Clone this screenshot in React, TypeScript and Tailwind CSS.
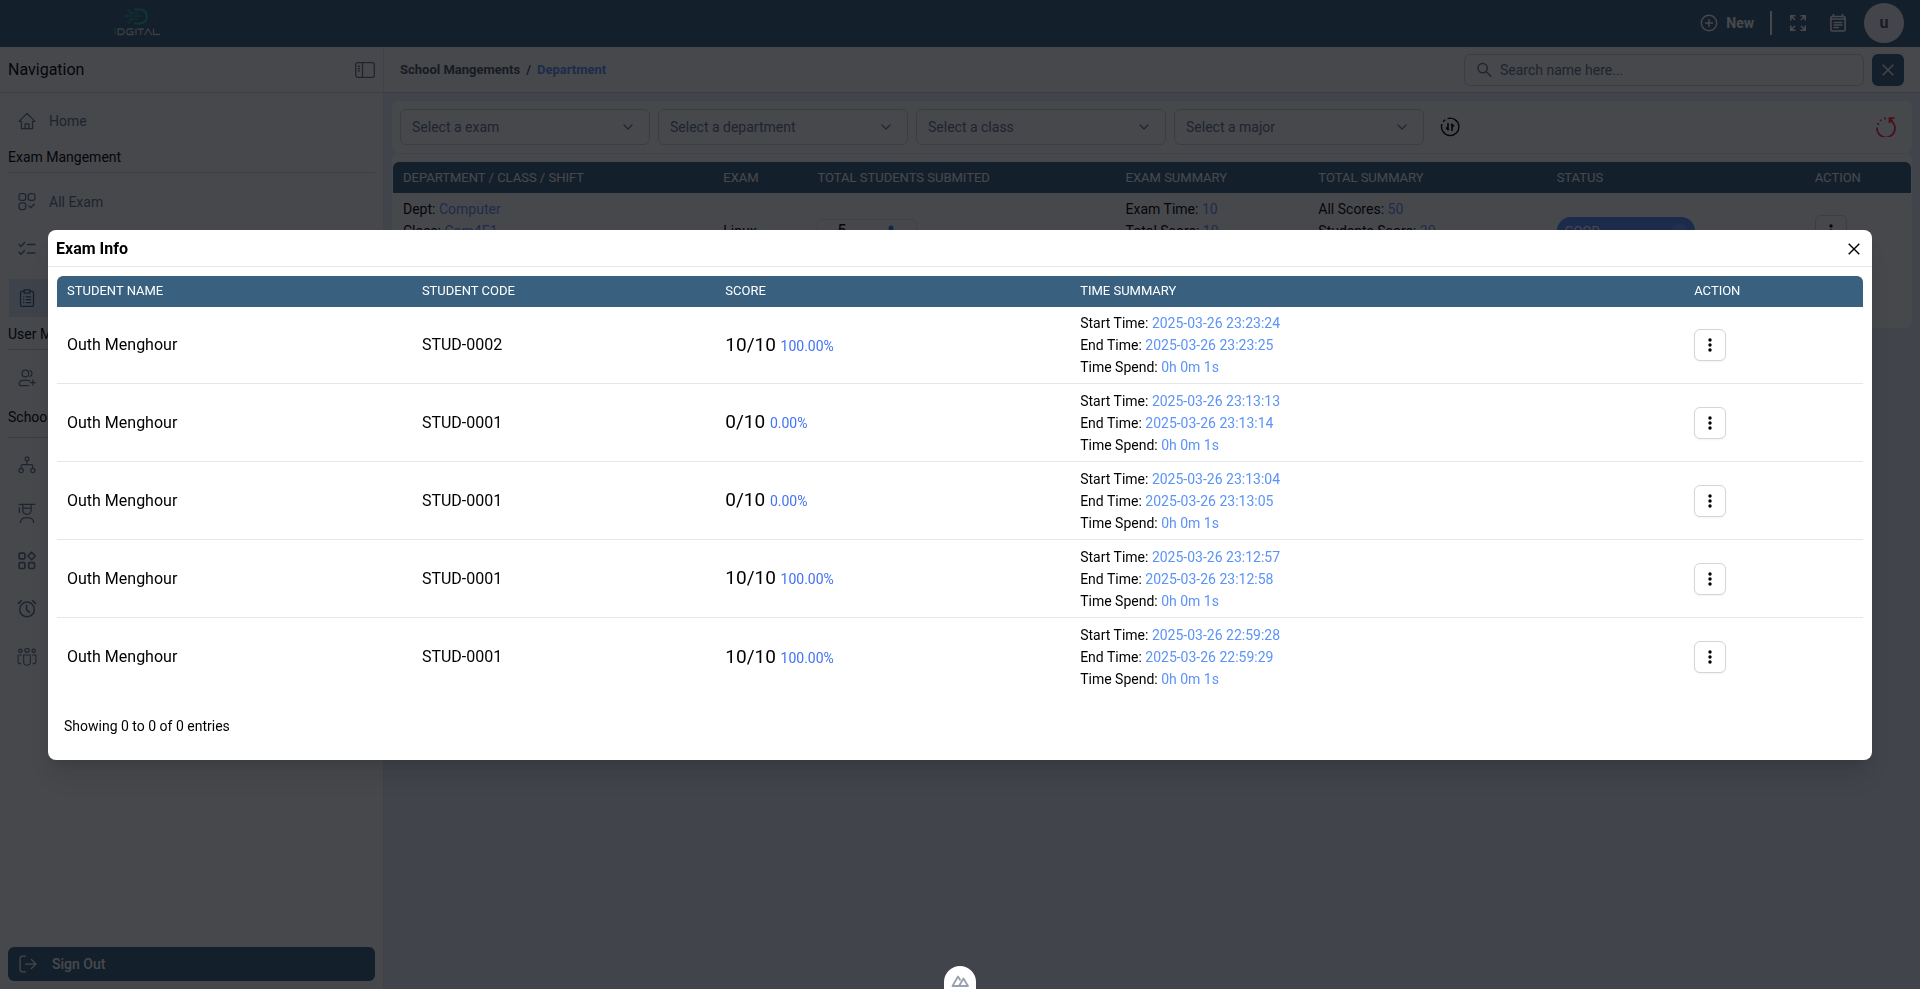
import React from "react";
import { ChevronDown } from "lucide-react";

type IconProps = { className?: string };

const stroke = {
  fill: "none",
  stroke: "currentColor",
  strokeWidth: 1.5,
  strokeLinecap: "round" as const,
  strokeLinejoin: "round" as const,
};

function Svg({ className = "size-5", children }: IconProps & { children: React.ReactNode }) {
  return (
    <svg viewBox="0 0 24 24" className={className} {...stroke} aria-hidden="true">
      {children}
    </svg>
  );
}

const icons = {
  home: (
    <Svg>
      <path d="M2.5 12.5 12 2.8l9.5 9.7H18.7v8.7H5.3v-8.7z" />
      <path d="M9.7 21v-5.5h4.6V21" />
    </Svg>
  ),
  allExam: (
    <Svg>
      <rect x="2.5" y="2" width="8" height="8" rx="2.5" />
      <rect x="13.5" y="2" width="8" height="8" rx="2.5" />
      <rect x="2.5" y="13" width="8" height="8" rx="2.5" />
      <path d="m14.2 16.7 2.2 2.2 4.2-4.2" />
    </Svg>
  ),
  checklist: (
    <Svg>
      <path d="m2.5 5.3 2.3 2.4L9 3.2M2.5 14.8l2.3 2.4L9 12.7M12.5 5.5h9M12.5 15.5h9" strokeWidth={1.8} />
    </Svg>
  ),
  clipboard: (
    <Svg>
      <path d="M8.5 4H5.8c-.9 0-1.6.7-1.6 1.6v14.8c0 .9.7 1.6 1.6 1.6h12.4c.9 0 1.6-.7 1.6-1.6V5.6c0-.9-.7-1.6-1.6-1.6h-2.7" />
      <path d="M8.5 2.2h7v4h-7zM7.8 10.5h.4M7.8 14h.4M7.8 17.5h.4M11 10.5h5.5M11 14h5.5M11 17.5h5.5" />
    </Svg>
  ),
  userAdd: (
    <Svg>
      <circle cx="10" cy="6.5" r="4" />
      <path d="M15.5 2.8a4 4 0 0 1 0 7.4M14 21H4.5c-1.3 0-2-.8-2-2 0-2.6 2.6-4.5 7.5-4.5 2.2 0 4 .4 5.3 1.1M19 14.5v6M16 17.5h6" />
    </Svg>
  ),
  org: (
    <Svg>
      <circle cx="12" cy="4.5" r="2.3" />
      <circle cx="5" cy="18.5" r="2.6" />
      <circle cx="19" cy="18.5" r="2.6" />
      <path d="M12 7v4.5M5 15.5v-2c0-1.1.9-2 2-2h10c1.1 0 2 .9 2 2v2" />
    </Svg>
  ),
  student: (
    <Svg>
      <path d="M2.5 1.5h19M7 1.5v7c0 3 2.2 5 5 5s5-2 5-5v-7M7 6h10M2.8 5.5v6M4 23.5c.3-3.8 3.4-6 8-6s7.7 2.2 8 6" />
    </Svg>
  ),
  category: (
    <Svg>
      <g strokeWidth={2}>
        <rect x="2.5" y="2.5" width="7" height="7" rx="1.5" />
        <rect x="2.5" y="14" width="7" height="7" rx="1.5" />
        <rect x="14" y="14" width="7" height="7" rx="1.5" />
        <path d="m17.5 1.5 4.5 4.5-4.5 4.5L13 6z" />
      </g>
    </Svg>
  ),
  alarm: (
    <Svg>
      <circle cx="12" cy="12.5" r="8.8" strokeWidth={1.8} />
      <path d="M11.5 7.5V13l3.5 3M1.5 5.5 5.3 2M22.5 5.5 18.7 2" strokeWidth={1.8} />
    </Svg>
  ),
  team: (
    <Svg>
      <circle cx="12" cy="4" r="2.5" />
      <circle cx="4" cy="4.5" r="2" />
      <circle cx="20" cy="4.5" r="2" />
      <path d="M8 9.5h8V18c0 2.3-1.7 3.8-4 3.8S8 20.300 8 18zM5.500 9.500H1.300v7.800c0 1.800 1.300 2.800 3.500 2.800M18.500 9.500h4.200v7.800c0 1.800-1.300 2.800-3.500 2.800" strokeWidth={1.3} />
    </Svg>
  ),
};

function Dots() {
  return (
    <button
      type="button"
      aria-label="Row actions"
      className="flex size-8 items-center justify-center rounded-md border border-gray-300 bg-white text-black shadow-xs"
    >
      <svg viewBox="0 0 16 16" className="size-4" fill="currentColor" aria-hidden="true">
        <circle cx="8" cy="3" r="1.7" />
        <circle cx="8" cy="8" r="1.7" />
        <circle cx="8" cy="13" r="1.7" />
      </svg>
    </button>
  );
}

function Cross({ className = "size-3" }: IconProps) {
  return (
    <svg viewBox="0 0 12 12" className={className} fill="none" stroke="currentColor" strokeWidth={1.4} aria-hidden="true">
      <path d="m.7.7 10.6 10.6M11.3.7.7 11.3" />
    </svg>
  );
}

function Logo() {
  return (
    <svg viewBox="0 0 46 28" className="h-7 w-[46px]" aria-label="iDGITAL" role="img">
      <g fill="none" stroke="#2bb5a6" strokeWidth="1">
        <path d="M20 1.5h6a7 7 0 0 1 0 14h-6" strokeWidth="2" />
        <path d="M15 5h9M13 8h15M15 11h9M18 5l-2.5-3M18 11l-2.5 3.5" />
        <circle cx="14.5" cy="2.5" r="1" />
        <circle cx="12.5" cy="8" r="1" />
        <circle cx="14.5" cy="14.5" r="1" />
      </g>
      <g fill="none" stroke="#cfd8dc" strokeWidth="1.3">
        <path d="M1 20.5V27" stroke="#2bb5a6" />
        <path d="M4 21h4.5l1.500 1.500V25l-1.500 1.500H4zM19 21h-5l-1.200 1.200v3L14 26.500h5v-2.700h-3M22 20.500V27M23.500 21H30M26.700 21v6M30.500 27l3.500-6 3.800 6M39.500 20.500v6H46" />
      </g>
    </svg>
  );
}

function NavLabel({ children, className = "pt-[7px] pb-[5px]" }: { children: string; className?: string }) {
  return <h2 className={`border-b border-gray-300 text-sm leading-5 text-black ${className}`}>{children}</h2>;
}

function NavItem({ icon, label, name, active = false }: { icon: React.ReactNode; label?: string; name?: string; active?: boolean }) {
  return (
    <a
      href="#"
      aria-label={name}
      className={`mx-px flex h-[38px] items-center gap-3 px-2 text-sm ${
        active ? "bg-[#dbe7fb] text-[#39607f]" : "text-slate-500"
      }`}
    >
      {icon}
      {label}
    </a>
  );
}

function Sidebar() {
  return (
    <aside className="flex w-96 shrink-0 flex-col border-r border-gray-200 bg-white">
      <div className="flex h-[46px] items-center justify-between border-b border-gray-300 px-2">
        <span className="text-base text-black">Navigation</span>
        <button type="button" aria-label="Toggle navigation" className="text-gray-500">
          <svg viewBox="0 0 20 16" className="h-4 w-5" fill="none" stroke="currentColor" strokeWidth={1.3} aria-hidden="true">
            <rect x=".7" y=".7" width="18.6" height="14.6" rx="2" />
            <path d="M7.5.7v14.6M2.8 4.2H5M2.8 6.5H5M2.8 8.8H5" />
          </svg>
        </button>
      </div>
      <nav className="flex flex-1 flex-col px-2 pt-[9px]">
        <NavItem icon={icons.home} label="Home" />
        <NavLabel>Exam Mangement</NavLabel>
        <div className="flex flex-col gap-2.5 pt-2.5">
          <NavItem icon={icons.allExam} label="All Exam" />
          <NavItem icon={icons.checklist} name="Exam Result" />
          <NavItem icon={icons.clipboard} name="Exam Submited" active />
        </div>
        <NavLabel>User Mangement</NavLabel>
        <div className="flex flex-col pt-[9px]">
          <NavItem icon={icons.userAdd} name="Users" />
        </div>
        <NavLabel className="py-2.5">School Mangement</NavLabel>
        <div className="flex flex-col gap-2.5 pt-2">
          <NavItem icon={icons.org} name="Department" />
          <NavItem icon={icons.student} name="Student" />
          <NavItem icon={icons.category} name="Class" />
          <NavItem icon={icons.alarm} name="Shift" />
          <NavItem icon={icons.team} name="Group" />
        </div>
      </nav>
      <div className="p-2">
        <button type="button" className="flex h-[34px] w-full items-center gap-3.5 rounded-md bg-[#39607f] px-2.5 text-sm font-medium text-white">
          <Svg>
            <path d="M9 2.5H5A2.500 2.500 0 0 0 2.500 5v14A2.500 2.500 0 0 0 5 21.500h4M9 12h12.500M16 6.500l5.500 5.500-5.500 5.500" />
          </Svg>
          Sign Out
        </button>
      </div>
    </aside>
  );
}

function Header() {
  return (
    <header className="flex h-[47px] items-center justify-between bg-[#39607f] pr-4 pb-px pl-[114px] text-white">
      <div className="pb-[3px]">
        <Logo />
      </div>
      <div className="flex items-center">
        <button type="button" className="flex items-center gap-2 text-sm font-bold">
          <svg viewBox="0 0 18 18" className="size-[18px]" fill="none" stroke="currentColor" strokeWidth={1.4} aria-hidden="true">
            <circle cx="9" cy="9" r="7.7" />
            <path d="M9 5v8M5 9h8" />
          </svg>
          New
        </button>
        <span className="mx-4 h-6 w-0.5 bg-white" />
        <button type="button" aria-label="Full screen" className="ml-0.5">
          <svg viewBox="0 0 16 16" className="size-4" fill="none" stroke="currentColor" strokeWidth={1.6} aria-hidden="true">
            <path d="M.8 5.5V.8h4.7M1 1l4 4M10.5.8h4.7v4.7M15 1l-4 4M.8 10.5v4.7h4.7M1 15l4-4M10.5 15.2h4.7v-4.7M15 15l-4-4" />
          </svg>
        </button>
        <button type="button" aria-label="Calendar" className="ml-6">
          <svg viewBox="0 0 16 18" className="h-[18px] w-4" fill="none" stroke="currentColor" strokeWidth={1.6} aria-hidden="true">
            <rect x=".9" y="2.5" width="14.2" height="14.5" rx="1.2" />
            <path d="M3.5 0v3M12.5 0v3M1 5h14M3.5 8.5h9M3.5 11h9M3.5 13.5H9" />
          </svg>
        </button>
        <button type="button" aria-label="Account" className="ml-[18px] flex size-10 items-center justify-center rounded-full bg-gray-100 text-base font-bold text-gray-600">
          u
        </button>
      </div>
    </header>
  );
}

function Toolbar() {
  return (
    <div className="flex h-[46px] items-center justify-between border-b border-gray-300 bg-white px-4">
      <nav aria-label="Breadcrumb" className="flex gap-1.5 text-[13px] font-bold text-gray-600">
        <a href="#">School Mangements</a>
        <span>/</span>
        <a href="#" className="text-[#5b93f8]">Department</a>
      </nav>
      <div className="flex gap-2">
        <label className="flex h-8 w-[400px] items-center gap-2 rounded-md border border-gray-300 px-3 text-gray-500">
          <svg viewBox="0 0 16 16" className="size-4" fill="none" stroke="currentColor" strokeWidth={1.5} aria-hidden="true">
            <circle cx="6" cy="6" r="5" />
            <path d="m9.7 9.7 5.6 5.6" />
          </svg>
          <input aria-label="Search name" placeholder="Search name here..." className="w-full bg-transparent text-sm outline-none placeholder:text-slate-500" />
        </label>
        <button type="button" aria-label="Clear search" className="flex size-8 items-center justify-center rounded-md bg-[#39607f] text-white">
          <Cross />
        </button>
      </div>
    </div>
  );
}

function Filters() {
  const options = ["Select a exam", "Select a department", "Select a class", "Select a major"];
  return (
    <div className="flex h-[52px] items-center rounded-md bg-white px-2">
      <div className="flex gap-2">
        {options.map((text) => (
          <div key={text} className="relative">
            <select aria-label={text} className="h-9 w-[250px] appearance-none rounded-md border border-gray-300 bg-transparent px-[11px] text-sm text-slate-500">
              <option>{text}</option>
            </select>
            <ChevronDown className="pointer-events-none absolute top-2.5 right-3.5 size-4 text-slate-500" strokeWidth={1.8} />
          </div>
        ))}
      </div>
      <button type="button" aria-label="Sort" className="ml-4 text-black">
        <svg viewBox="0 0 20 20" className="size-5" fill="none" stroke="currentColor" strokeWidth={1.4} aria-hidden="true">
          <path d="M7.5 1.6A8.7 8.7 0 1 1 2 7M3.2 4.700l2-2" />
          <path d="M8 6v6.500M6 10.500l2 2.200 1-1M12 14V7.500M14 9.500l-2-2.200-1 1" strokeWidth={1.6} />
        </svg>
      </button>
      <button type="button" aria-label="Reset filters" className="mr-2 ml-auto text-red-500">
        <svg viewBox="0 0 20 20" className="size-5" fill="none" stroke="currentColor" strokeWidth={1.8} aria-hidden="true">
          <path d="M1 10.5a9 9 0 1 0 13.500-7M13.500 6V1.200h5M13.500 1.200l3 3" />
          <path d="M1.200 7H3M3.800 3.300h1.800M8 1.500h1.800" />
        </svg>
      </button>
    </div>
  );
}

const headClass = "h-[31px] bg-[#39607f] px-2.5 text-left text-[13px] leading-4 font-normal text-white first:rounded-tl-md last:rounded-tr-md";

function Line({ label, value }: { label: string; value: string }) {
  return (
    <p className="text-sm leading-[22px]">
      {label}: <span className="text-[#5b93f8]">{value}</span>
    </p>
  );
}

function SummaryTable() {
  return (
    <div className="h-[174px] rounded-md bg-white px-px pt-2">
      <table className="w-full table-fixed text-sm text-black">
        <colgroup>
          <col className="w-[21.1%]" />
          <col className="w-[6.2%]" />
          <col className="w-[20.3%]" />
          <col className="w-[12.7%]" />
          <col className="w-[15.7%]" />
          <col className="w-[17%]" />
          <col className="w-[7%]" />
        </colgroup>
        <thead>
          <tr>
            {["DEPARTMENT / CLASS / SHIFT", "EXAM", "TOTAL STUDENTS SUBMITED", "EXAM SUMMARY", "TOTAL SUMMARY", "STATUS", "ACTION"].map((h) => (
              <th key={h} className={headClass}>{h}</th>
            ))}
          </tr>
        </thead>
        <tbody>
          <tr className="h-[76px]">
            <td className="px-2.5">
              <Line label="Dept" value="Computer" />
              <Line label="Class" value="Com4E1" />
              <Line label="Shift" value="Evening" />
            </td>
            <td className="px-2.5">Linux</td>
            <td className="px-2.5">
              <button type="button" className="flex h-6 w-[100px] items-center justify-around rounded-md border border-gray-200 text-base">
                5
                <svg viewBox="0 0 14 16" className="h-4 w-3.5 text-blue-500" fill="currentColor" aria-hidden="true">
                  <circle cx="7" cy="5" r="2.5" />
                  <path d="M1 15c0-4 2.5-6 6-6s6 2 6 6z" />
                </svg>
              </button>
            </td>
            <td className="px-2.5">
              <Line label="Exam Time" value="10" />
              <Line label="Total Score" value="10" />
              <Line label="Questions" value="5" />
            </td>
            <td className="px-2.5">
              <Line label="All Scores" value="50" />
              <Line label="Students Score" value="30" />
              <Line label="Average" value="60%" />
            </td>
            <td className="px-2.5">
              <span className="flex h-7 w-[138px] items-center justify-between rounded-full bg-[#5b8ffb] px-2 text-[13px] text-white">
                GOOD
                <span className="size-4 rounded-full bg-[#6f9dff]" />
              </span>
            </td>
            <td className="px-2.5"><Dots /></td>
          </tr>
        </tbody>
      </table>
    </div>
  );
}

const attempts = [
  { code: "STUD-0002", score: "10/10", percent: "100.00%", start: "2025-03-26 23:23:24", end: "2025-03-26 23:23:25" },
  { code: "STUD-0001", score: "0/10", percent: "0.00%", start: "2025-03-26 23:13:13", end: "2025-03-26 23:13:14" },
  { code: "STUD-0001", score: "0/10", percent: "0.00%", start: "2025-03-26 23:13:04", end: "2025-03-26 23:13:05" },
  { code: "STUD-0001", score: "10/10", percent: "100.00%", start: "2025-03-26 23:12:57", end: "2025-03-26 23:12:58" },
  { code: "STUD-0001", score: "10/10", percent: "100.00%", start: "2025-03-26 22:59:28", end: "2025-03-26 22:59:29" },
];

function ExamDialog() {
  return (
    <div className="fixed inset-0 flex items-center justify-center bg-[#07080e]/74">
      <section role="dialog" aria-modal="true" aria-labelledby="exam-info" className="w-[95%] rounded-lg bg-white text-black shadow-xl">
        <div className="flex h-[37px] items-center justify-between border-b border-gray-200 px-2 pt-0.5">
          <h1 id="exam-info" className="text-base font-bold">Exam Info</h1>
          <button type="button" aria-label="Close" className="mr-1">
            <Cross />
          </button>
        </div>
        <div className="px-[9px] pt-[9px]">
          <table className="w-full table-fixed text-base">
            <colgroup>
              <col className="w-[19.65%]" />
              <col className="w-[16.8%]" />
              <col className="w-[19.65%]" />
              <col className="w-[34%]" />
              <col className="w-[9.9%]" />
            </colgroup>
            <thead>
              <tr>
                {["STUDENT NAME", "STUDENT CODE", "SCORE", "TIME SUMMARY", "ACTION"].map((h) => (
                  <th key={h} className={headClass}>{h}</th>
                ))}
              </tr>
            </thead>
            <tbody className="divide-y divide-gray-200">
              {attempts.map((a) => (
                <tr key={a.start} className="h-[78px] first:h-[77px]">
                  <td className="px-2.5">Outh Menghour</td>
                  <td className="px-2.5">{a.code}</td>
                  <td className="px-2.5 text-[19px]">
                    {a.score} <span className="text-sm text-[#4272f5]">{a.percent}</span>
                  </td>
                  <td className="px-2.5">
                    <Line label="Start Time" value={a.start} />
                    <Line label="End Time" value={a.end} />
                    <Line label="Time Spend" value="0h 0m 1s" />
                  </td>
                  <td className="px-2.5"><Dots /></td>
                </tr>
              ))}
            </tbody>
          </table>
        </div>
        <p className="px-4 pt-5 pb-6 text-sm">Showing 0 to 0 of 0 entries</p>
      </section>
    </div>
  );
}

export default function App() {
  return (
    <div className="flex min-h-screen flex-col bg-white font-['Roboto',sans-serif]">
      <Header />
      <div className="flex flex-1">
        <Sidebar />
        <main className="flex min-w-0 flex-1 flex-col bg-[#e6edfb]">
          <Toolbar />
          <div className="flex flex-col gap-px p-2">
            <Filters />
            <SummaryTable />
          </div>
        </main>
      </div>
      <ExamDialog />
      <div className="fixed inset-x-0 bottom-0 flex justify-center">
        <button type="button" aria-label="Developer tools" className="flex h-[23px] w-8 items-end justify-center rounded-t-full bg-white pb-0.5 text-gray-400">
          <svg viewBox="0 0 18 12" className="h-3 w-[18px]" fill="none" stroke="currentColor" strokeWidth={1.8} strokeLinejoin="round" aria-hidden="true">
            <path d="M8 11H1.5L7 1.5l2.500 4M8 11l4.500-7.500L17 11z" />
          </svg>
        </button>
      </div>
    </div>
  );
}
